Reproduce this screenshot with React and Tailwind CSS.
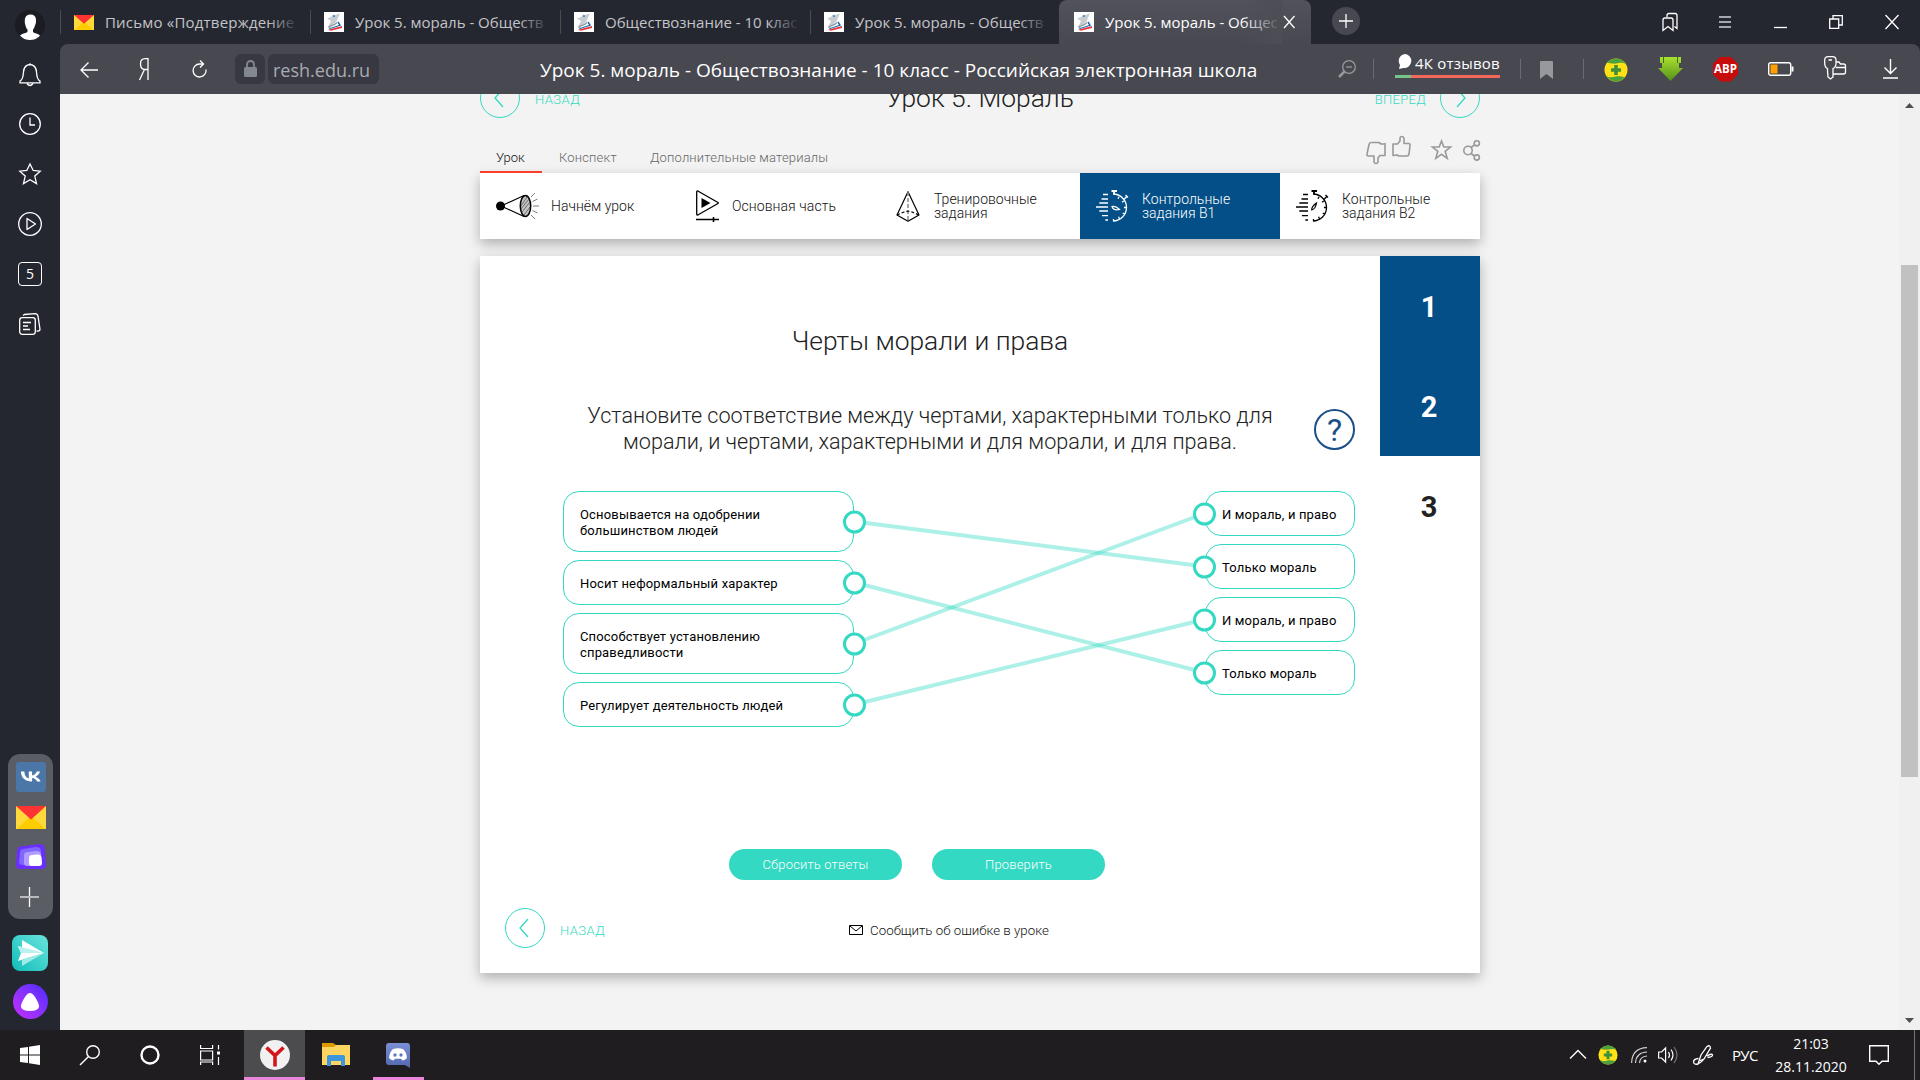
import React from "react";

const UI = "font-['Open_Sans','Noto_Sans',sans-serif]";

function T({ className = "", children }) {
  return <span className={"whitespace-nowrap " + className}>{children}</span>;
}

function Icon({ w, h, className = "", children, stroke = "#fff", sw = 1.3 }) {
  return (
    <svg width={w} height={h} viewBox={`0 0 ${w} ${h}`} fill="none" stroke={stroke} strokeWidth={sw} className={"shrink-0 overflow-visible " + className}>
      {children}
    </svg>
  );
}

function MailIcon({ w, h, className = "" }) {
  return (
    <svg width={w} height={h} viewBox="0 0 30 23" preserveAspectRatio="none" className={"shrink-0 " + className}>
      <path fill="#ffd83b" d="M0 0h30v23H0z" />
      <path fill="#ffcc00" d="M2 22 15 10l13 12v1H2z" />
      <path fill="#ff3333" d="M0 0h30L15 13.500z" />
    </svg>
  );
}

function SchoolIcon() {
  return (
    <svg width="20" height="20" viewBox="0 0 20 20" className="shrink-0">
      <path fill="#fff" d="M0 0h20v20H0z" />
      <path fill="#c9ccd0" d="M3 6.500 7 5l2-2.500 2 .5 5-1.500-1.500 3-2 5-5 4.500-3.500 1 3-6z" />
      <path fill="#4a90c8" d="M9 3.300h2v1.700H9z" />
      <path fill="#8f979f" d="m4 14.500 6-2.500 3-2 .5 1-2.500 2-6 2.500z" />
      <path fill="#0c62ae" d="m14.500 9.500 2.500 4L6 17l-2-1.500 3 .3 8-2.700-1.500-2.600z" />
      <path fill="#e8373d" d="M18 14v2L7 18.700l-3-1z" />
    </svg>
  );
}

function PlusBadge({ s, className = "" }) {
  return (
    <svg width={s} height={s} viewBox="0 0 24 24" className={"shrink-0 " + className}>
      <circle cx="12" cy="12" r="11.500" fill="#ffe116" />
      <path fill="#4ba13c" d="M3 4.800A11.500 11.500 0 0 1 22 6.500C19 3.500 15 5 12.500 5.500 9 6 6 5 3 4.800zM21 19.200A11.500 11.500 0 0 1 2 17.500c3 3 7 1.500 9.500 1 3.500-.5 6.500.5 9.500.7z" />
      <path fill="#3f9139" d="M10.200 7h3.600v3.200H17v3.600h-3.200V17h-3.600v-3.200H7v-3.600h3.200z" />
    </svg>
  );
}

function Tab({ icon, children, className = "" }) {
  return (
    <div className="flex h-11 w-[250px] shrink-0 items-center">
      <div className="h-6 w-px bg-[#4a4b54]" />
      <div className="ml-[13px]">{icon}</div>
      <div className="relative ml-[11px] h-11 w-[194px] pt-[2px] text-[15px] leading-[40px] text-[#c3c4c8]">
        <T className={className}>{children}</T>
        <div className="absolute -right-px top-0 h-11 w-8 bg-gradient-to-r from-transparent to-[#252730]" />
      </div>
    </div>
  );
}

function TopBar() {
  return (
    <div className="flex h-11 bg-[#252730]">
      <div className="w-[60px] shrink-0 pl-[15px] pt-[10px]">
        <svg width="30" height="30" viewBox="0 0 30 30">
          <circle cx="15" cy="15" r="15" fill="#1b1c22" />
          <path fill="#fff" d="M15.500 4.500q5 0 5.500 5 .3 3-1 6-.8 3-2 4v2.500q1 1 4 1.800 2.500.8 3 2-4 4.200-10 4.200T5 25.500q1-1.200 3.500-2 3.500-.8 4-1.800v-2.200q-1.500-1-2-4-1-3-.7-6 .7-5 5.700-5z" />
        </svg>
      </div>
      <Tab className="tracking-[0.2px]" icon={<MailIcon w="20" h="15" />}>Письмо «Подтверждение</Tab>
      <Tab icon={<SchoolIcon />}>Урок 5. мораль - Обществ</Tab>
      <Tab icon={<SchoolIcon />}>Обществознание - 10 клас</Tab>
      <div className="w-[249px]"><Tab icon={<SchoolIcon />}>Урок 5. мораль - Обществ</Tab></div>
      <div className="flex h-11 w-[252px] items-center rounded-t-lg bg-gradient-to-b from-[#52525c] to-[#484851] pl-[15px]">
        <SchoolIcon />
        <div className="relative ml-[11px] h-11 w-[174px] pt-[2px] text-[15px] leading-[40px] text-white">
          <T>Урок 5. мораль - Общес</T>
          <div className="absolute -right-[3px] top-0 h-11 w-10 bg-gradient-to-r from-transparent to-[#4d4d56]" />
        </div>
        <Icon w={10} h={12} className="ml-[5px]"><path d="m0 0 10.500 12M10.500 0 0 12" /></Icon>
      </div>
      <div className="ml-[21px] mt-[7px] flex h-7 w-7 items-center justify-center rounded-full bg-[#484851]">
        <Icon w={14} h={14}><path d="M7 0v14M0 7h14" /></Icon>
      </div>
      <div className="ml-[302px] flex h-[43px] items-center">
        <Icon w={16} h={20}><path d="M1 18.500V8q0-2 2-2h6q2 0 2 2v10.500l-5-4zM5 5V3.500q0-2 2-2h6q2 0 2 2v13l-2.500-2" /></Icon>
        <Icon w={12} h={12} className="ml-[41px]" stroke="#a6a7ac" sw={2}><path d="M0 1h12M0 6h12M0 11h12" /></Icon>
        <Icon w={13} h={12} className="ml-[43px]"><path d="M0 11.500h13" /></Icon>
        <Icon w={14} h={14} className="ml-[42px]"><path d="M.7 4h9v9.300h-9zM4 4V.700h9.300V10H10" /></Icon>
        <Icon w={14} h={14} className="ml-[42px]"><path d="m.5 0 13 14m0-14-13 14" /></Icon>
      </div>
    </div>
  );
}

function Toolbar() {
  return (
    <div className="flex h-[50px] items-center rounded-tr-lg rounded-tl-lg bg-[#484851]">
      <Icon w={18} h={16} className="ml-[20px] mt-px" sw={1.3}><path d="M18 8H1M8.500.500 1 8l7.500 7.500" /></Icon>
      <Icon w={10} h={22} className="ml-[41px]" sw={1.3}><path d="M9 22V.700H6Q1.500.700 1.500 6T6 11.500h3M5.500 11.500.5 22" /></Icon>
      <Icon w={15} h={18} className="ml-[43px]" sw={1.3}><path d="M14 9.500a6.500 6.500 0 1 1-6.500-5.500H11M8 .5 11.500 4 8 7.500" /></Icon>
      <div className="ml-[28px] flex h-[30px] w-[30px] items-center justify-center rounded-md bg-[#373841]">
        <svg width="13" height="18" viewBox="0 0 13 18"><path d="M3 8V5q0-4 3.500-4T10 5v3" fill="none" stroke="#83878f" strokeWidth="1.800" /><rect y="7" width="13" height="10" rx="1.500" fill="#83878f" /></svg>
      </div>
      <div className="ml-[3px] flex h-[30px] w-[111px] items-center rounded-md bg-[#373841] pl-[5px] pt-[2px] text-[18px] text-[#a9aab0]"><T>resh.edu.ru</T></div>
      <div className="ml-[161px] w-[718px] pt-[3px] text-[19px] leading-[47px] text-white"><T>Урок 5. мораль - Обществознание - 10 класс - Российская электронная школа</T></div>
      <Icon w={18} h={18} className="ml-[80px]" stroke="#97989d"><circle cx="11" cy="7" r="6.300" /><path d="M8 7h6" /><path strokeWidth="2.500" d="m6.500 11.500-5.500 5.500" /></Icon>
      <div className="ml-[17px] h-5 w-px bg-[#6a6a73]" />
      <div className="-mt-[7px] ml-[21px] w-[105px]">
        <div className="flex h-[22px]">
          <svg width="20" height="18" viewBox="0 0 20 18" className="-mt-px"><path fill="#fff" d="M10 2a7 7 0 1 1-1.500 14L4 17l1-4A7 7 0 0 1 10 2z" /></svg>
          <T className="text-[15px] leading-[20px] tracking-[0.2px] text-white">4К отзывов</T>
        </div>
        <div className="h-[3px] bg-gradient-to-r from-[#74c48c] from-[15%] to-[#f36859] to-[15%]" />
      </div>
      <div className="ml-[20px] h-5 w-px bg-[#6a6a73]" />
      <svg width="13" height="18" viewBox="0 0 13 18" className="ml-[19px] mt-px"><path fill="#97989d" d="M0 1q0-1 1-1h11q1 0 1 1v17l-6.500-5L0 18z" /></svg>
      <div className="ml-[30px] h-5 w-px bg-[#6a6a73]" />
      <PlusBadge s={24} className="ml-[20px] mt-px" />
      <svg width="25" height="24" viewBox="0 0 25 24" className="-mt-px ml-[30px]"><defs><linearGradient id="ga" x2="0" y2="1"><stop stopColor="#a9e02f" /><stop offset="1" stopColor="#549118" /></linearGradient></defs><path fill="url(#ga)" d="M2 0h21v6h-2v5h4L12.500 24 0 11h4V6H2z" /><path stroke="#3f6d16" d="M5.500 0v6m14-6v6" /></svg>
      <div className="ml-[30px] flex h-[25px] w-[25px] items-center justify-center bg-[#c70d0c] text-[11.500px] font-bold text-white [clip-path:polygon(29%_0,71%_0,100%_29%,100%_71%,71%_100%,29%_100%,0_71%,0_29%)]"><T>ABP</T></div>
      <Icon w={26} h={14} className="ml-[30px]" sw={1.4}><rect x=".7" y=".7" width="22" height="12.600" rx="2" /><path fill="#ff9f00" stroke="none" d="M2.500 2.500h7v9h-7z" /><path strokeWidth="2" d="M24.500 4.500v5" /></Icon>
      <Icon w={22} h={24} className="-mt-[2px] ml-[30px]"><path d="M3.500 14V12.500Q.700 11.500.700 7V4q0-3.300 3.500-3.300H8.500q3.500 0 3.500 3.300v3q0 4.500-3 5.500V21l-2.500 2-2.500-2zM4.500 4h3.500M12 6h3l1.500 2h3q2 0 2 2v6q0 2-2 2H9M12 11.500h9" /></Icon>
      <Icon w={15} h={20} className="ml-[37px]" sw={1.4}><path d="M7.500 0v14M1.500 8.500l6 6 6-6M0 19h15" /></Icon>
    </div>
  );
}

function Side() {
  return (
    <div className="flex w-[60px] shrink-0 flex-col items-center bg-[#252730]">
      <Icon w={22} h={24} className="mt-[19px]"><path d="M11 1.500Q5 2 4.500 9c-.3 5-1 8-3.500 9v1.800h20V18c-2.500-1-3.200-4-3.500-9Q17 2 11 1.500zM11 1.500V.300M8 20.500q3 4 6 0" /></Icon>
      <Icon w={22} h={22} className="mt-[26px]"><circle cx="11" cy="11" r="10.300" /><path d="M11 4.500V12h5" /></Icon>
      <Icon w={22} h={22} className="mt-[28px]"><path d="m11 1 3.200 6.500 7 .7-5.400 4.900 1.700 7.500L11 16.700l-6.500 3.900 1.700-7.500L.8 8.200l7-.7z" /></Icon>
      <Icon w={24} h={24} className="mt-[27px]"><circle cx="12" cy="12" r="11.300" /><path strokeLinejoin="round" d="m9 6.500 8.500 5.500L9 17.500z" /></Icon>
      <div className="mt-[26px] flex h-6 w-6 items-center justify-center rounded-[4px] border-[1.500px] border-white text-[14px] leading-none text-white">5</div>
      <Icon w={22} h={22} className="mt-[27px]"><rect x=".7" y="4.700" width="15.600" height="16.600" rx="2.500" /><path d="M4 2.500 5.500 1.500 16 .700q2.500 0 3 2.500l2 13q0 2-3.500 2M4 9.500h8M4 13h5M4 16.500h7" /></Icon>
      <div className="mt-[419px] flex h-[165px] w-[45px] flex-col items-center rounded-xl bg-[#5b5d64] pt-2">
        <div className="ml-px flex h-[30px] w-[30px] items-center justify-center rounded-[3px] bg-[#4a76a8]">
          <svg width="22" height="22" viewBox="0 0 24 24" fill="#fff"><path d="M12.900 18.200C5.600 18.200 1.200 13.400 1 5.400h3.800c.1 5.900 2.800 8.400 4.800 8.900V5.400h3.600v5.100c2.100-.2 4.300-2.500 5.100-5.100h3.500c-.6 3.200-2.900 5.500-4.700 6.500 1.700.8 4.400 2.800 5.400 6.300h-3.800c-.8-2.500-2.900-4.500-5.500-4.700v4.700z" transform="translate(0 1.500) scale(1 .85)" /></svg>
        </div>
        <MailIcon w="30" h="23" className="ml-px mt-[14px]" />
        <svg width="30" height="26" viewBox="0 0 30 26" className="ml-px mt-[15px]"><path fill="#6a2fff" d="M4 2.500 24 0q4 0 4.500 4L30 21q0 4-4 4H4q-4 0-4-4l1-14q.5-4 3-4.500z" /><path fill="#7f66ff" d="M7 5 20 3q5 0 5 4l1 10-6 4H7q-4 0-4-3l1-9q0-4 3-4z" /><path fill="#b09cff" d="m12 8 8-1q5 0 5 4v7l-5 4h-9q-3 0-3-3V11q0-3 4-3z" /><path fill="#fff" d="m16 11 6-.5q3 0 3.500 3L26 19q0 3-3 3h-7q-3 0-3-3v-5q0-3 3-3z" /></svg>
        <Icon w={19} h={20} className="-ml-px mt-[17px]"><path d="M9.500 0v20" /><path stroke="#b9babd" strokeWidth="2" d="M0 10h19" /></Icon>
      </div>
      <svg width="36" height="36" viewBox="0 0 36 36" className="-ml-px mt-[16px]"><defs><linearGradient id="sa" x1="1" x2="0" y2="1"><stop stopColor="#6ae4dc" /><stop offset="1" stopColor="#10bdb9" /></linearGradient></defs><rect width="36" height="36" rx="8" fill="url(#sa)" /><path fill="#fff" d="m10 5 22 13H9L6 11l4 1z" /><path fill="#b8f1ee" d="m9 12 23 6H9l-3-6z" /><path fill="#fff" d="M9 18h23L6 26z" /><path fill="#a0ebe7" d="M32 18 10 31V25z" /></svg>
      <div className="mt-[13px] flex h-[35px] w-[35px] items-center justify-center rounded-full bg-gradient-to-bl from-[#4a26ff] to-[#c726ff]">
        <svg width="20" height="18" viewBox="0 0 20 18"><path fill="#fff" d="M10 0Q12.500 0 15 4q4.500 7 4 10-1 4-9 4t-9-4Q.500 11 5 4 7.500 0 10 0z" /></svg>
      </div>
    </div>
  );
}

function NavCircle({ dir }) {
  return (
    <div className="flex h-10 w-10 shrink-0 items-center justify-center rounded-full border border-[#33d9c2]">
      <Icon w={10} h={18} stroke="#33d9c2" className={dir === "r" ? "ml-px" : "mr-[3px]"}><path d={dir === "r" ? "m1 0 8 9-8 9" : "M9 0 1 9l8 9"} /></Icon>
    </div>
  );
}

const megaphone = (
  <Icon w={42} h={28} stroke="#000" sw={1.2} className="ml-4 mr-[14px]">
    <circle cx="4.500" cy="14" r="4.500" fill="#000" stroke="none" />
    <path d="M5 14 28 3.500M5 14l23 10.500" />
    <ellipse cx="29.500" cy="14" rx="5.200" ry="10.500" fill="#c4c4c4" strokeWidth="1.500" />
    <path strokeWidth=".7" stroke="#444" d="m25 14 6-9m-6 12 8-10m-7 13 8-10m-6 13 6-8M35 5l4-4M36.500 9.500l5-2.500M37 14h6M36.500 18.500l5 2.500M35 23l4 4" />
  </Icon>
);
const playIcon = (
  <Icon w={23} h={32} stroke="#000" className="ml-4 mr-[13px]">
    <path strokeLinejoin="round" d="M.7 2q0-1.500 1.500-.8L22 12.500q.8.500 0 1L2.200 24.800q-1.500.6-1.500-.8z" />
    <path fill="#000" stroke="none" d="M5.500 8v10l9-5z" /><path strokeWidth="1.600" d="M0 29.500h23M17.500 27v5" />
  </Icon>
);
const pyramid = (
  <Icon w={24} h={31} stroke="#000" sw={1.2} className="ml-4 mr-[14px]">
    <path strokeLinejoin="round" d="M12 .7 1 24l11 6.300L23 24z" /><path stroke="#888" strokeWidth="1.500" strokeDasharray="4 2" d="M12 1v29" /><path strokeDasharray="3 2" d="m1 24 7-3q4-1.500 8 0l7 3" />
  </Icon>
);
function Timer({ color, steep }) {
  return (
    <Icon w={32} h={32} stroke={color} sw={1.3} className="ml-4 mr-[14px]">
      <path strokeWidth="1.800" d="M15.500 1H21M18 1v3" />
      <path d="M17 4a13.500 13.500 0 0 1 0 27M28 9.500l3.200-3.500M29.500 5l2.500 2.500M23 6.800l-1 2M27.800 11l-1.800 1.200M30 17.500h-2M28.500 24l-1.800-1M23.500 28.800l-1-2M17.500 31v-2" />
      <path d="M7 4.500h5M5.500 9H12M3.300 13H12M0 17h12M3.300 21H12M6 25.700h6M9.300 30H12" />
      <path strokeWidth="1.200" d={steep ? "M20.500 13q-5 3.500-4.800 6.800 3.800-.8 4.800-6.800z" : "M16 16.500q3.500-1 7.500 3-6 1.500-7.500-3z"} />
    </Icon>
  );
}

function Step({ icon, active, children }) {
  return (
    <div className={"flex h-[66px] w-[200px] items-center text-[14px] font-light leading-[14px] " + (active ? "bg-[#044f87] text-white" : "text-[#111]")}>
      {icon}
      <div className="flex flex-col">{children}</div>
    </div>
  );
}

const dot = "absolute top-1/2 h-[23px] w-[23px] -translate-y-1/2 rounded-full border-[3px] border-[#33d9c2] bg-white";

function Left({ tall, children }) {
  return (
    <div className={"relative flex flex-col justify-center rounded-2xl border border-[#33d9c2] pl-[16px] pt-[2px] tracking-[0.16px] " + (tall ? "h-[61px]" : "h-[45px]")}>
      {children}
      <span className={dot + " -right-[13px]"} />
    </div>
  );
}
function Right({ children }) {
  return (
    <div className="relative flex h-[45px] flex-col justify-center rounded-2xl border border-[#33d9c2] pl-[16px] pt-[2px] tracking-[0.16px]">
      <T>{children}</T>
      <span className={dot + " -left-[13px]"} />
    </div>
  );
}

function Page() {
  return (
    <div className="flex h-[936px] w-[1839px] overflow-hidden bg-[#f3f3f3] font-[Roboto,sans-serif]">
      <div className="-mt-4 ml-[420px] w-[1000px] shrink-0">
        <div className="flex h-10 items-center text-[13px] text-[#33d9c2]">
          <div className="flex w-[300px] items-center"><NavCircle dir="l" /><T className="ml-[15px] pt-[3px] font-light tracking-[0.45px]">НАЗАД</T></div>
          <div className="flex-1 text-center text-[26.400px] font-light leading-[40px] text-[#222]"><T>Урок 5. Мораль</T></div>
          <div className="flex w-[300px] items-center justify-end"><T className="mr-[14px] pt-[3px] font-light tracking-[0.3px]">ВПЕРЕД</T><NavCircle dir="r" /></div>
        </div>
        <div className="flex h-[55px] items-end text-[13px] font-light leading-[16px] text-[#666]">
          <div className="w-[62px] border-b-2 border-[#fb3f2c] pb-[5px] pl-[16px] text-[#111]"><T>Урок</T></div>
          <div className="w-[91px] pb-[7px] pl-[17px] tracking-[0.17px]"><T>Конспект</T></div>
          <div className="w-[733px] pb-[7px] pl-[17px] tracking-[0.17px]"><T>Дополнительные материалы</T></div>
          <div className="flex h-full items-start pt-[18px]">
            <Icon w={20} h={23} stroke="#999" sw={1.600} className="mt-[5px]"><path strokeLinejoin="round" d="M19 2v12.500h-5L12 17v4q-.5 1.500-2 1.500T8 21v-6H2.500Q.500 15 1 13L3 3.500Q3.500 1.500 5 1.500h8L15 3h4" /></Icon>
            <Icon w={19} h={21} stroke="#999" sw={1.600} className="ml-[6px]"><path strokeLinejoin="round" d="M1 19.500V8h4.500L8 5V2q.3-1.500 1.800-1.500T12 2v5.500h5Q18.500 8 18 9.500L17 18q-.5 2-2 2H7l-2-1z" /></Icon>
            <Icon w={21} h={21} stroke="#999" sw={1.600} className="ml-[20px] mt-[3px]"><path d="m10.500 2 2.300 6h6.700l-5.300 4.300 2 7-5.700-4-5.700 4 2-7L1.500 8h6.700z" /></Icon>
            <Icon w={17} h={21} stroke="#999" sw={1.600} className="ml-[11px] mt-[4px]"><circle cx="5" cy="10.500" r="4.200" /><circle cx="13.800" cy="3.300" r="2.600" /><circle cx="13.800" cy="17.500" r="2.600" /><path d="m8 7.500 3.500-2.500M8 13.500l3.500 2.500" /></Icon>
          </div>
        </div>
        <div className="flex bg-white shadow-[0_5px_12px_rgba(0,0,0,0.28)]">
          <Step icon={megaphone}><T className="-ml-px -mt-px">Начнём урок</T></Step>
          <Step icon={playIcon}><T className="-mt-px tracking-[0.07px]">Основная часть</T></Step>
          <Step icon={pyramid}><T>Тренировочные</T><T>задания</T></Step>
          <Step active icon={<Timer color="#fff" />}><T className="tracking-[0.05px]">Контрольные</T><T>задания В1</T></Step>
          <Step icon={<Timer steep color="#000" />}><T className="tracking-[0.05px]">Контрольные</T><T>задания В2</T></Step>
        </div>
        <div className="mt-[17px] flex h-[717px] bg-white shadow-[0_5px_12px_rgba(0,0,0,0.28)]">
          <div className="w-[900px] pt-[69px]">
            <div className="text-center text-[26.400px] font-light leading-8 text-[#222]"><T>Черты морали и права</T></div>
            <div className="mt-[46px] grid h-[88px] grid-cols-[90px_720px_90px]">
              <div />
              <div className="flex flex-col items-center text-[21.600px] font-light leading-[26.400px] text-[#222]">
                <T>Установите соответствие между чертами, характерными только для</T>
                <T>морали, и чертами, характерными и для морали, и для права.</T>
              </div>
              <div className="ml-6 mt-[6px] flex h-[41px] w-[41px] items-center justify-center rounded-full border-2 border-[#1a4f87] text-[32px] leading-none text-[#1a4f87]"><T>?</T></div>
            </div>
            <div className="flex h-[236px] text-[13px] leading-4 text-black">
              <div className="z-10 ml-[83px] flex w-[291px] flex-col gap-2">
                <Left tall><T>Основывается на одобрении</T><T>большинством людей</T></Left>
                <Left><T>Носит неформальный характер</T></Left>
                <Left tall><T>Способствует установлению</T><T>справедливости</T></Left>
                <Left><T>Регулирует деятельность людей</T></Left>
              </div>
              <Icon w={351} h={236} stroke="#33d9c2" sw={4}>
                <path opacity=".4" d="M.5 30.500 350.500 75.500" /><path opacity=".4" d="M.5 91.500 350.500 181.500" /><path opacity=".4" d="M.5 152.500 350.500 22.500" /><path opacity=".4" d="M.5 213.500 350.500 128.500" />
              </Icon>
              <div className="z-10 flex w-[150px] flex-col gap-2">
                <Right>И мораль, и право</Right>
                <Right>Только мораль</Right>
                <Right>И мораль, и право</Right>
                <Right>Только мораль</Right>
              </div>
            </div>
            <div className="mt-[122px] flex gap-[30px] pl-[249px] text-[13px] font-light leading-[31px] tracking-[0.17px] text-white">
              <div className="h-[31px] w-[173px] rounded-full bg-[#33d9c2] text-center"><T>Сбросить ответы</T></div>
              <div className="h-[31px] w-[173px] rounded-full bg-[#33d9c2] text-center"><T>Проверить</T></div>
            </div>
            <div className="mt-[28px] flex h-10 items-center pl-[25px] text-[13px] text-[#33d9c2]">
              <NavCircle dir="l" /><T className="ml-[15px] pt-[5px] font-light tracking-[0.45px]">НАЗАД</T>
              <Icon w={14} h={10} stroke="#000" sw={1} className="ml-[244px] mt-[3px]"><path d="M.5.5h13v9H.5zM1 1l6 5 6-5" /></Icon>
              <T className="ml-[7px] pt-[5px] text-[13.300px] font-light text-[#111]">Сообщить об ошибке в уроке</T>
            </div>
          </div>
          <div className="w-[100px] text-center text-[29px] font-bold leading-[100px]">
            <div className="h-[200px] bg-[#044f87] pr-[2px] pt-px text-white"><div className="h-[100px]">1</div><div className="h-[99px]">2</div></div>
            <div className="pr-[2px] pt-px text-[#222]">3</div>
          </div>
        </div>
      </div>
    </div>
  );
}

function Taskbar() {
  return (
    <div className="flex h-[50px] bg-[#1f1d20] text-white">
      <svg width="20" height="20" viewBox="0 0 20 20" className="ml-5 mt-[15px]" fill="#fff"><path d="M0 3 8 2v7.500H0zM9 1.800 20 0v9.500H9zM0 10.500h8V18l-8-1zM9 10.500h11V20L9 18.300z" /></svg>
      <Icon w={20} h={20} className="ml-10 mt-[15px]" sw={1.4}><circle cx="13" cy="7" r="6.300" /><path d="M8.500 11.500 0 20" /></Icon>
      <Icon w={20} h={20} className="ml-10 mt-[15px]" sw={2.4}><circle cx="10" cy="10" r="8.500" /></Icon>
      <Icon w={20} h={20} className="ml-10 mt-[15px]" sw={1.2}><path d="M.600 0v3.500h12V0M.600 6h12v9H.600zM.600 20v-3h12v3M18.500 0v4.500M18.500 12v8" /><path fill="#fff" stroke="none" d="M17 6.500h3v3h-3z" /></Icon>
      <div className="ml-6 flex h-[50px] w-[61px] flex-col items-center justify-between border-b-[3px] border-[#e986dc] bg-[#4c4b4d] pt-[10px]">
        <svg width="30" height="30" viewBox="0 0 30 30"><circle cx="15" cy="15" r="15" fill="#f1f1f1" /><path fill="none" stroke="#d3161b" strokeWidth="3.600" d="m6.500 7.500 8.500 8 8.500-8M15 14v12.500" /></svg>
      </div>
      <svg width="28" height="23" viewBox="0 0 28 23" className="ml-[17px] mt-[13px]"><path fill="#dd9a00" d="M0 0h11l3 2v4H0z" /><path fill="#ffd562" d="M0 4h12l2-2h14v20H0z" /><path fill="#3c96dd" d="M5 23v-9q0-2 2-2h14q2 0 2 2v9h-4v-5H9v5z" /></svg>
      <div className="ml-[23px] flex h-[50px] w-[51px] border-b-[3px] border-[#e986dc] pl-[13px] pt-[13px]">
        <svg width="24" height="25" viewBox="0 0 24 25"><defs><linearGradient id="dg" x2="0" y2="1"><stop stopColor="#7a8fd6" /><stop offset="1" stopColor="#5468ad" /></linearGradient></defs><path fill="url(#dg)" d="M3 0h18q3 0 3 3v22l-5-3H3q-3 0-3-3V3q0-3 3-3z" /><path fill="#fff" d="M7 6q5-1.500 10 0 3.500 3 4 9-2 2-4.500 2.500L15 15.800H9L7.500 17.500Q5 17 3 15q.500-6 4-9z" /><circle cx="9" cy="12" r="1.700" fill="#6478bd" /><circle cx="15" cy="12" r="1.700" fill="#6478bd" /></svg>
      </div>
      <Icon w={16} h={9} className="ml-[1146px] mt-[20px]" sw={1.4}><path d="m0 8.500 8-8 8 8" /></Icon>
      <PlusBadge s={20} className="ml-3 mt-[15px]" />
      <Icon w={16} h={16} className="ml-[13px] mt-[17px]" sw={1.2}><path d="M.6 16Q1 1 16 .6M4.500 16Q5 5.500 16 5M8.500 16Q9 9.500 16 9" stroke="#d0d0d0" /><circle cx="14" cy="14" r="1.500" fill="#fff" stroke="none" /></Icon>
      <Icon w={20} h={18} className="ml-[11px] mt-[16px]" sw={1.2}><path d="M.6 6h3l4-4v14l-4-4h-3zM10.500 6q2 3 0 6M13 3.500q4 5.500 0 11" /><path stroke="#777" d="M16 1q6 8 0 16" /></Icon>
      <Icon w={20} h={20} className="ml-[15px] mt-[15px]" sw={1.3}><path d="M6 16 8 10 14 1.500q3-2 3.500 1.500L11 14zM6 16l-1 3q-4 1-4.500-2 0-3 5-3.500M11 14q-2 3-6 5M14 11q5-3 5.500-1 0 2-5 2.500" /></Icon>
      <div className="ml-[19px] w-[27px] text-[15px] leading-[50px] tracking-[-0.7px]"><T>РУС</T></div>
      <div className="ml-[16px] flex w-[72px] flex-col items-center pt-[2px] text-[14px] leading-[23px]"><T>21:03</T><T>28.11.2020</T></div>
      <Icon w={20} h={20} className="ml-[22px] mt-[15px]" sw={1.4}><path d="M.700.700h18.600v15.600H13l-3 3-3-3H.700z" /></Icon>
      <div className="ml-[25px] h-[50px] w-px bg-[#77767a]" />
    </div>
  );
}

export default function App() {
  return (
    <div className={"flex h-[1080px] w-[1920px] flex-col overflow-hidden bg-[#252730] " + UI}>
      <TopBar />
      <div className="flex h-[986px]">
        <Side />
        <div className="w-[1860px]">
          <Toolbar />
          <div className="flex">
            <Page />
            <div className="flex h-[936px] w-[21px] flex-col items-center bg-[#f0f0f0]">
              <svg width="9" height="5" viewBox="0 0 9 5" className="mt-[9px]"><path fill="#505050" d="M0 5h9L4.500 0z" /></svg>
              <div className="mt-[157px] h-[512px] w-[17px] bg-[#c1c1c1]" />
              <svg width="9" height="5" viewBox="0 0 9 5" className="mt-[241px]"><path fill="#505050" d="M0 0h9L4.500 5z" /></svg>
            </div>
          </div>
        </div>
      </div>
      <Taskbar />
    </div>
  );
}
